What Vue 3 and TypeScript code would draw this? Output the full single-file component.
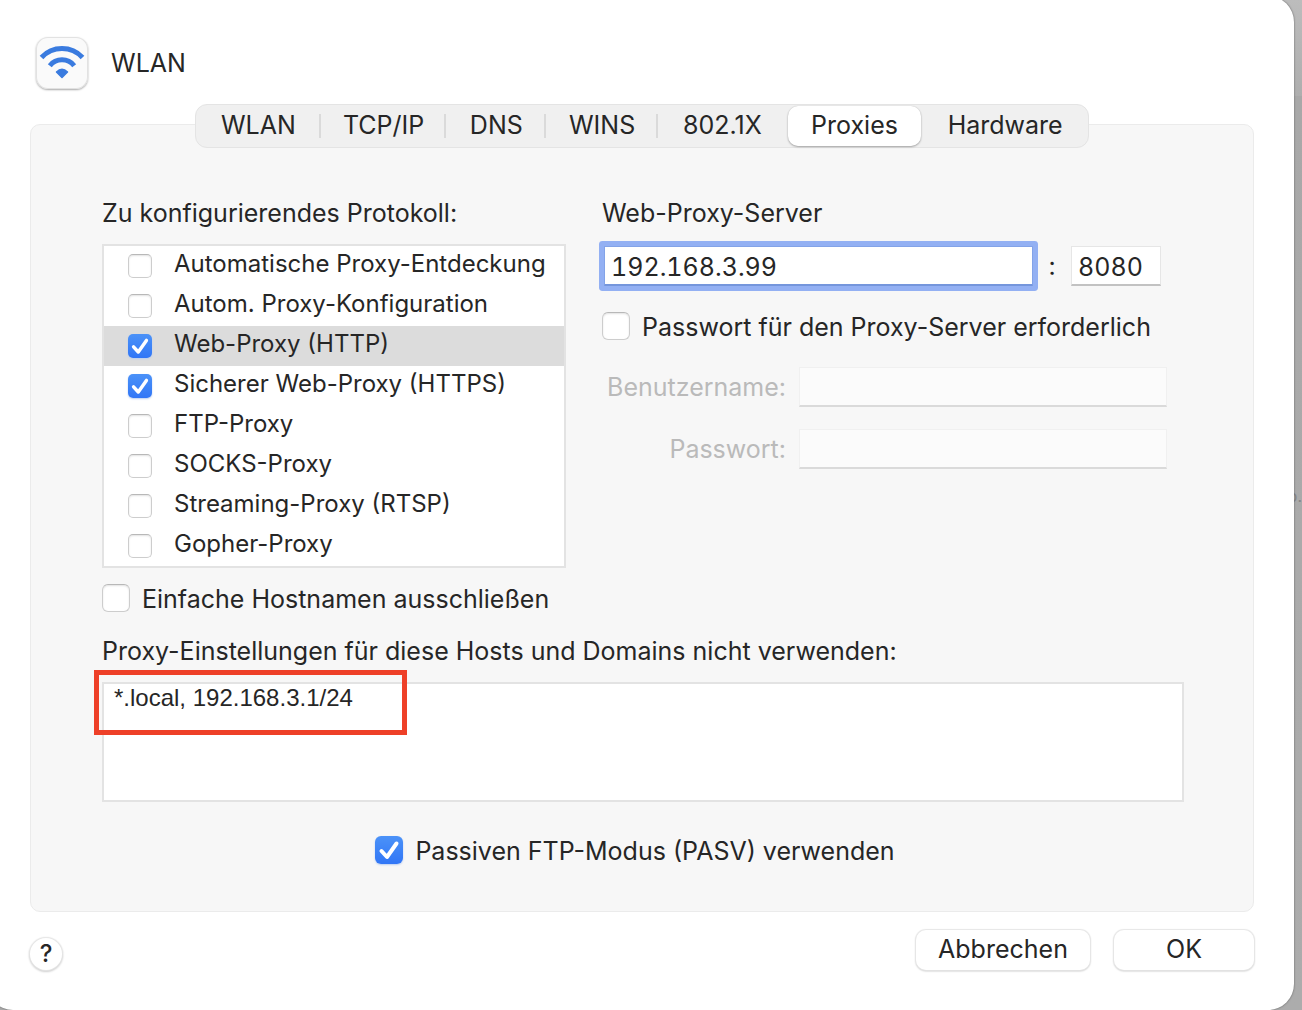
<script setup lang="ts">
import { ref } from 'vue'

interface Tab {
  label: string
  weight: number
}

interface Protocol {
  id: string
  label: string
  enabled: boolean
}

const tabs: Tab[] = [
  { label: 'WLAN', weight: 125 },
  { label: 'TCP/IP', weight: 126 },
  { label: 'DNS', weight: 100 },
  { label: 'WINS', weight: 112 },
  { label: '802.1X', weight: 129 },
  { label: 'Proxies', weight: 134 },
  { label: 'Hardware', weight: 166 },
]
const activeTab = ref('Proxies')

const protocols = ref<Protocol[]>([
  { id: 'auto-discovery', label: 'Automatische Proxy-Entdeckung', enabled: false },
  { id: 'auto-config', label: 'Autom. Proxy-Konfiguration', enabled: false },
  { id: 'http', label: 'Web-Proxy (HTTP)', enabled: true },
  { id: 'https', label: 'Sicherer Web-Proxy (HTTPS)', enabled: true },
  { id: 'ftp', label: 'FTP-Proxy', enabled: false },
  { id: 'socks', label: 'SOCKS-Proxy', enabled: false },
  { id: 'rtsp', label: 'Streaming-Proxy (RTSP)', enabled: false },
  { id: 'gopher', label: 'Gopher-Proxy', enabled: false },
])
const selectedProtocol = ref('http')

const server = ref('192.168.3.99')
const port = ref('8080')
const needsPassword = ref(false)
const user = ref('')
const password = ref('')
const excludeSimple = ref(false)
const bypass = ref('*.local, 192.168.3.1/24')
const passiveFtp = ref(true)
</script>

<template>
  <div class="desktop">
    <span class="behind">p.</span>
    <main class="sheet">
      <header class="title">
        <span class="title-icon">
          <svg viewBox="0 0 52 52" width="52" height="52" fill="none" stroke="#3a7bdf" aria-hidden="true">
            <path d="M5.500 20.500A28 28 0 0 1 46.500 20.500" stroke-width="5" />
            <path d="M13.800 28.700A15.600 15.600 0 0 1 38.200 28.700" stroke-width="5" />
            <path d="M20.500 35Q26 29.500 31.500 35L26 40.500Z" fill="#3a7bdf" stroke-width="1.500" stroke-linejoin="round" />
          </svg>
        </span>
        <h1>WLAN</h1>
      </header>

      <nav class="tabs" role="tablist">
        <button
          v-for="tab in tabs"
          :key="tab.label"
          type="button"
          role="tab"
          class="tab"
          :class="{ active: tab.label === activeTab }"
          :style="{ flexGrow: tab.weight }"
          :aria-selected="tab.label === activeTab"
          @click="activeTab = tab.label"
        >{{ tab.label }}</button>
      </nav>

      <section class="panel">
        <div class="columns">
          <div class="protocols">
            <h2>Zu konfigurierendes Protokoll:</h2>
            <ul class="list">
              <li
                v-for="p in protocols"
                :key="p.id"
                :class="{ selected: p.id === selectedProtocol }"
                @click="selectedProtocol = p.id"
              >
                <input :id="p.id" v-model="p.enabled" type="checkbox" class="check small" />
                <label :for="p.id">{{ p.label }}</label>
              </li>
            </ul>
          </div>

          <div class="server">
            <h2><label for="server">Web-Proxy-Server</label></h2>
            <div class="address">
              <input id="server" v-model="server" type="text" class="field focused" />
              <span class="colon">:</span>
              <input v-model="port" type="text" class="field port" aria-label="Port" />
            </div>
            <label class="option">
              <input v-model="needsPassword" type="checkbox" class="check" />
              <span>Passwort für den Proxy-Server erforderlich</span>
            </label>
            <div class="credentials">
              <label for="user">Benutzername:</label>
              <input id="user" v-model="user" type="text" class="field" :disabled="!needsPassword" />
              <label for="password">Passwort:</label>
              <input id="password" v-model="password" type="password" class="field" :disabled="!needsPassword" />
            </div>
          </div>
        </div>

        <label class="option exclude">
          <input v-model="excludeSimple" type="checkbox" class="check" />
          <span>Einfache Hostnamen ausschließen</span>
        </label>

        <h2 class="bypass-title"><label for="bypass">Proxy-Einstellungen für diese Hosts und Domains nicht verwenden:</label></h2>
        <div class="bypass">
          <textarea id="bypass" v-model="bypass" spellcheck="false"></textarea>
          <span class="marker"></span>
        </div>

        <label class="option passive">
          <input v-model="passiveFtp" type="checkbox" class="check" />
          <span>Passiven FTP-Modus (PASV) verwenden</span>
        </label>
      </section>

      <footer class="actions">
        <button type="button" class="help" aria-label="Hilfe">?</button>
        <button type="button" class="push cancel">Abbrechen</button>
        <button type="button" class="push ok">OK</button>
      </footer>
    </main>
  </div>
</template>

<style>
body {
  margin: 0;
}
</style>

<style scoped>
* {
  box-sizing: border-box;
}

.desktop {
  position: relative;
  display: flex;
  min-height: 100vh;
  overflow: hidden;
  background: linear-gradient(#bcbcbc, #aeaeae 96px, #a8a8a8 96px, #acacac);
  color: #262626;
  font-family: Inter, "Liberation Sans", sans-serif;
  font-size: 25px;
  line-height: 32px;
}

.behind {
  position: absolute;
  top: 480px;
  right: 0;
  color: #858585;
  font-size: 16px;
}

.sheet {
  position: relative;
  flex: 1;
  min-width: 0;
  margin: -4px 8px 0 -13px;
  padding: 41px 40px 40px 43px;
  border-radius: 26px;
  background: #fff;
  box-shadow: 0 0 2px #555;
}

h1,
h2 {
  margin: 0;
  font-size: inherit;
  font-weight: 400;
}

button,
input,
textarea {
  margin: 0;
  color: inherit;
  font: inherit;
}

.title {
  display: flex;
  align-items: center;
  gap: 23px;
  height: 52px;
  padding-left: 6px;
}

.title-icon {
  width: 52px;
  height: 52px;
  border-radius: 12px;
  background: #fafafa;
  box-shadow: inset 0 0 0 1px #e2e2e2, 0 1px 2px #a8a8a8;
}

.title-icon svg {
  display: block;
}

.tabs {
  position: relative;
  display: flex;
  width: 894px;
  max-width: 100%;
  height: 44px;
  margin: 15px auto -24px;
  border: 1px solid #e4e4e4;
  border-radius: 12px;
  background: #f0f0f0;
}

.tab {
  position: relative;
  flex: 1 1 0;
  padding: 0 0 2px;
  border: 0;
  border-radius: 10px;
  background: none;
  white-space: nowrap;
}

.tab:not(:nth-child(n + 5))::after {
  position: absolute;
  top: 9px;
  right: 0;
  width: 2px;
  height: 24px;
  background: #dadada;
  content: "";
}

.tab.active {
  margin: 1px;
  background: #fff;
  box-shadow: 0 0 1px #bdbdbd, 0 1px 2px #a0a0a0;
}

.panel {
  padding: 72px 69px 45px 71px;
  border: 1px solid #ebebeb;
  border-radius: 10px;
  background: #f7f7f7;
}

.columns {
  display: flex;
  gap: 36px;
}

.protocols {
  flex: 0 0 464px;
}

.list {
  margin: 15px 0 0;
  padding: 0;
  border: 2px solid #e3e3e3;
  background: #fff;
  font-size: 24px;
  list-style: none;
}

.list li {
  display: flex;
  align-items: center;
  gap: 22px;
  height: 40px;
  padding-left: 24px;
}

.list label {
  padding-bottom: 4px;
  white-space: nowrap;
}

.list .selected {
  background: #dcdcdc;
}

.check {
  flex: none;
  width: 28px;
  height: 28px;
  border: 1px solid #cdcdcd;
  border-top-color: #b8b8b8;
  border-radius: 6px;
  appearance: none;
  background: #fff;
  box-shadow: inset 0 1px 2px #e2e2e2;
}

.check.small {
  width: 24px;
  height: 24px;
  border-radius: 5px;
}

.check:checked {
  border: 0;
  background:
    url("data:image/svg+xml,%3Csvg xmlns='http://www.w3.org/2000/svg' viewBox='0 0 28 28'%3E%3Cpath d='M6.500 15l5.500 6L21.500 7.500' fill='none' stroke='white' stroke-width='4' stroke-linecap='round' stroke-linejoin='round'/%3E%3C/svg%3E") center / 100% no-repeat,
    linear-gradient(#4b92f8, #3176f6);
  box-shadow: 0 1px 2px #b9cdf0;
}

.server {
  flex: 1;
  min-width: 0;
}

.address {
  display: flex;
  align-items: center;
  margin-top: 17px;
  padding: 0 23px 0 2px;
}

.field {
  min-width: 0;
  height: 40px;
  padding: 2px 6px 0;
  border: 1px solid #e6e6e6;
  border-bottom: 2px solid #c2c2c2;
  border-radius: 0;
  outline: 0;
  background: #fff;
  font-variant-numeric: tabular-nums;
}

.field.focused {
  flex: 1;
  border-color: #83a3e8;
  border-bottom-color: #7596dc;
  border-radius: 1px;
  box-shadow: 0 0 0 5px #93b0f3;
}

.colon {
  width: 38px;
  text-align: center;
}

.port {
  width: 90px;
}

.option {
  display: flex;
  align-items: center;
  gap: 12px;
  height: 32px;
}

.option span {
  padding-top: 2px;
}

.server .option {
  margin-top: 24px;
}

.credentials {
  display: grid;
  grid-template-columns: 184px 1fr;
  align-items: center;
  gap: 22px 13px;
  margin-top: 25px;
  padding-right: 17px;
  color: #bababa;
  text-align: right;
}

.field:disabled {
  border-color: #f0f0f0;
  border-bottom-color: #dadada;
  background: #fbfbfb;
}

.exclude {
  margin-top: 14px;
}

.bypass-title {
  margin-top: 21px;
}

.bypass {
  position: relative;
  margin-top: 15px;
}

textarea {
  display: block;
  width: 100%;
  height: 120px;
  padding: 0 10px;
  border: 2px solid #e3e3e3;
  outline: 0;
  background: #fff;
  font-family: "Liberation Sans", Arial, sans-serif;
  font-size: 24px;
  line-height: 28px;
  resize: none;
}

.marker {
  position: absolute;
  top: -12px;
  left: -8px;
  width: 313px;
  height: 65px;
  border: 5px solid #ee4028;
  pointer-events: none;
}

.passive {
  justify-content: center;
  margin-top: 32px;
  padding-right: 16px;
}

.actions {
  display: flex;
  align-items: center;
  gap: 24px;
  height: 40px;
  margin-top: 18px;
}

.help {
  width: 32px;
  height: 32px;
  margin: 8px auto 0 0;
  padding: 0;
  border: 0;
  border-radius: 50%;
  background: #fff;
  box-shadow: 0 0 1px 1px #e6e6e6, 0 1px 2px 1px #cecece;
  font-size: 24px;
  font-weight: 500;
}

.push {
  height: 40px;
  padding: 0 0 2px;
  border: 0;
  border-radius: 10px;
  background: #fff;
  box-shadow: 0 0 1px 1px #e6e6e6, 0 1px 2px #a8a8a8;
}

.cancel {
  width: 174px;
}

.ok {
  width: 140px;
}
</style>
